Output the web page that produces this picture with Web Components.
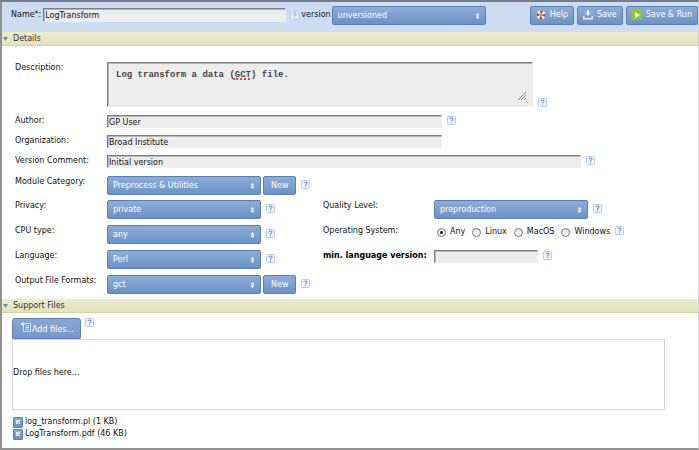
<!DOCTYPE html>
<html lang="en">
<head>
<meta charset="utf-8">
<title>Module Editor</title>
<style>
  html, body { margin: 0; min-height: 100%; }
  body {
    font: 8px/12px "DejaVu Sans", Verdana, sans-serif;
    color: #111;
    background: #fff;
    min-height: 100vh;
    display: flex;
    flex-direction: column;
  }
</style>
</head>
<body>
<module-editor></module-editor>
<script>
const BASE = `
  *, *::before, *::after { box-sizing: border-box; }
  button, input, select, textarea { font: inherit; color: inherit; margin: 0; border-radius: 0; }
  input[type=text], textarea {
    background: #ededed; border: 1px solid #ededed;
    border-top-color: #7d7d7d; border-left-color: #7d7d7d; outline: none;
    box-shadow: inset 1px 1px #b8b8b8;
  }
  input[type=text] { height: 13px; padding: 1px 0 0 1px; line-height: 10px; }
`;

class BaseElement extends HTMLElement {
  connectedCallback() {
    if (this.shadowRoot) return;
    const t = document.createElement('template');
    t.innerHTML = `<style>${BASE}${this.styles()}</style>${this.markup()}`;
    this.attachShadow({ mode: 'open' }).append(t.content.cloneNode(true));
  }
  attr(name) { return (this.getAttribute(name) || '').replace(/&/g, '&amp;').replace(/"/g, '&quot;'); }
}

customElements.define('help-tip', class extends BaseElement {
  styles() { return `
    :host { display: block; flex: none; width: 9px; height: 9px; }
    :host([faint]) { opacity: .6; }
    button { display: block; width: 9px; height: 9px; padding: 0; border: 0; background: none; }
    svg { display: block; }`; }
  markup() { return `
    <button type="button" aria-label="Help">
      <svg width="9" height="9" viewBox="0 0 9 9">
        <rect x=".5" y=".5" width="8" height="8" rx="1" fill="#eef4fb" stroke="#b9cde4"/>
        <path d="M3 3.3C3 1.6 6 1.6 6 3.2C6 4.2 4.5 4.1 4.5 5.4M4.5 6.4V7.4" fill="none" stroke="#6f96c6" stroke-width="1.1"/>
      </svg>
    </button>`; }
});

customElements.define('action-button', class extends BaseElement {
  styles() { return `
    :host { display: block; flex: none; }
    button {
      display: flex; align-items: center; justify-content: center; gap: 4px;
      height: 19px; padding: 0 5px; color: #fff; white-space: nowrap;
      border: 1px solid #5a7fb2; border-radius: 2px;
      background: linear-gradient(#8eadd8, #6b92c5);
    }
    :host([plain]) button { padding: 0 7px; }
    :host([large]) button { height: 21px; padding: 0 6px 0 8px; border-radius: 3px 3px 1px 1px; background: linear-gradient(#8ba6d2, #7896c8); gap: 0; }
    :host([large]) slot:not([name]) { display: block; padding-top: 3px; }
    :host([large]) slot[name] { display: block; height: 14px; }
    :host([tiny]) button { width: 10px; height: 11px; padding: 0; border-radius: 1px; }`; }
  markup() { return `<button type="button" ${this.hasAttribute('name') ? `aria-label="${this.attr('name')}"` : ''}><slot name="icon"></slot><slot></slot></button>`; }
});

const SELECT_CSS = `
  .select { position: relative; flex: none; width: 154px; height: 19px; }
  select {
    display: block; appearance: none; width: 100%; height: 19px; padding: 1px 16px 0 5px; color: #fff;
    border: 1px solid #5a7fb2; border-radius: 2px; background: linear-gradient(#8eadd8, #6b92c5);
  }
  .select svg { position: absolute; right: 6px; top: 7px; pointer-events: none; }`;
const selectMarkup = value => `
  <span class="select">
    <select id="control"><option>${value}</option></select>
    <svg width="5" height="6" viewBox="0 0 5 6"><path d="M.5 2.5L2.5 0L4.5 2.5ZM.5 3.5L2.5 6L4.5 3.5Z" fill="#fff"/></svg>
  </span>`;

const ROW_CSS = `
  :host { display: flex; align-items: flex-start; }
  label.name { flex: none; width: var(--label-width, 92px); white-space: nowrap; }
  label.strong { font-weight: bold; color: #000; }
  help-tip { margin: 1px 0 0 5px; }`;

customElements.define('text-field', class extends BaseElement {
  styles() { return `${ROW_CSS}
    input { flex: 0 1 auto; min-width: 0; width: var(--field-width, 335px); }`; }
  markup() { return `
    <label class="name ${this.hasAttribute('strong') ? 'strong' : ''}" for="control">${this.attr('label')}</label>
    <input id="control" type="text" value="${this.attr('value')}">
    ${this.hasAttribute('tip') ? '<help-tip></help-tip>' : ''}`; }
});

customElements.define('note-field', class extends BaseElement {
  styles() { return `${ROW_CSS}
    :host { align-items: flex-end; }
    label.name { align-self: flex-start; }
    .area { position: relative; flex: 0 1 426px; min-width: 0; }
    textarea {
      display: block; width: 100%; height: 45px; padding: 6px 8px; resize: none; overflow: hidden;
      font: bold 9px/12px "Liberation Mono", "Courier New", monospace; color: #444;
    }
    .spelling { position: absolute; left: 126px; top: 16px; width: 17px; border-top: 2px dotted #d4483f; }
    .grip { position: absolute; right: 7px; bottom: 7px; }`; }
  markup() { return `
    <label class="name" for="control">${this.attr('label')}</label>
    <span class="area">
      <textarea id="control" spellcheck="false">${this.attr('value')}</textarea>
      <span class="spelling"></span>
      <svg class="grip" width="8" height="8" viewBox="0 0 8 8"><path d="M0 8L8 0M3 8L8 3M6 8L8 6" stroke="#777" stroke-width=".9"/></svg>
    </span>
    <help-tip></help-tip>`; }
});

customElements.define('select-field', class extends BaseElement {
  styles() { return `${ROW_CSS}${SELECT_CSS}
    help-tip { margin-top: 4px; }
    action-button { margin-left: 2px; }`; }
  markup() { return `
    <label class="name" for="control">${this.attr('label')}</label>
    ${selectMarkup(this.attr('value'))}
    ${this.hasAttribute('creatable') ? '<action-button plain>New</action-button>' : ''}
    <help-tip></help-tip>`; }
});

customElements.define('radio-field', class extends BaseElement {
  styles() { return `${ROW_CSS}
    .caption { flex: none; width: var(--label-width); white-space: nowrap; }
    .choices { display: flex; gap: 7px; padding: 1px 0 0 3px; }
    .choices label { display: flex; align-items: center; gap: 4px; white-space: nowrap; }
    input {
      appearance: none; width: 9px; height: 9px; border: 1px solid #777; border-radius: 50%;
      background: linear-gradient(#ddd, #fff);
    }
    input:checked { background: radial-gradient(circle, #222 0 1px, #eee 2px); }`; }
  markup() {
    const choices = this.attr('choices').split(',');
    return `
    <span class="caption" id="caption">${this.attr('label')}</span>
    <div class="choices" role="radiogroup" aria-labelledby="caption">
      ${choices.map((c, i) => `<label><input type="radio" name="choice" ${i ? '' : 'checked'}>${c}</label>`).join('')}
    </div>
    <help-tip></help-tip>`;
  }
});

customElements.define('editor-section', class extends BaseElement {
  styles() { return `
    :host { display: block; }
    h2 { margin: 0; font: inherit; }
    h2 button {
      display: flex; align-items: center; gap: 5px; width: 100%; height: 14px; padding: 0 0 0 1px;
      text-align: left; color: #333; border: 0; border-bottom: 1px solid #d2d1a3;
      background: linear-gradient(#ebebd3, #e2e2bb);
    }`; }
  markup() { return `
    <h2><button type="button" aria-expanded="true">
      <svg width="5" height="4" viewBox="0 0 5 4"><path d="M0 0H5L2.5 4Z" fill="#5c93bd"/></svg>
      ${this.attr('heading')}
    </button></h2>
    <slot></slot>`; }
});

customElements.define('editor-toolbar', class extends BaseElement {
  styles() { return `${SELECT_CSS}
    :host { display: flex; align-items: center; height: 30px; padding: 0 0 4px 9px; background: #cedcf1; }
    label { flex: none; white-space: nowrap; }
    input[type=text] { flex: 0 1 243px; min-width: 0; height: 14px; margin: 0 4px 0 2px; }
    help-tip { margin-right: 2px; }
    .select { margin-left: 1px; }
    .actions { display: flex; gap: 3px; margin-left: auto; }`; }
  markup() { return `
    <label for="name">Name*:</label>
    <input id="name" type="text" value="LogTransform">
    <help-tip faint></help-tip>
    <label for="control">version</label>
    ${selectMarkup('unversioned')}
    <div class="actions">
      <action-button>
        <svg slot="icon" width="10" height="10" viewBox="0 0 10 10"><circle cx="5" cy="5" r="3" fill="none" stroke="#fff" stroke-width="3"/><circle cx="5" cy="5" r="3" fill="none" stroke="#c4493d" stroke-width="3" stroke-dasharray="2.6 2.112" stroke-dashoffset="1.3"/></svg>
        Help
      </action-button>
      <action-button>
        <svg slot="icon" width="10" height="10" viewBox="0 0 10 10"><rect x="1" y="0" width="8" height="6" rx="1" fill="#7caee6"/><path d="M5 0V3" stroke="#fff" stroke-width="2"/><path d="M2.5 2.8H7.5L5 5.8Z" fill="#fff"/><path d="M.8 6V8.7H9.2V6" fill="none" stroke="#e6f0ff" stroke-width="1.4"/></svg>
        Save
      </action-button>
      <action-button>
        <svg slot="icon" width="10" height="10" viewBox="0 0 10 10"><rect width="10" height="10" rx="1" fill="#91c52d"/><path d="M3 2L8 5L3 8Z" fill="#fff"/></svg>
        Save &amp; Run
      </action-button>
    </div>`; }
});

customElements.define('support-files', class extends BaseElement {
  styles() { return `
    :host { display: block; padding: 5px 33px 8px 10px; }
    .add { display: flex; align-items: flex-start; gap: 4px; }
    .drop { display: flex; align-items: center; height: 71px; padding: 0 0 4px; border: 1px solid #d6d6d6; }
    ul { list-style: none; margin: 6px 0 0; padding: 0 0 0 1px; }
    li { display: flex; align-items: center; gap: 2px; height: 12px; }
    a { color: inherit; text-decoration: none; }`; }
  markup() {
    const files = ['log_transform.pl (1 KB)', 'LogTransform.pdf (46 KB)'];
    return `
    <div class="add">
      <action-button large>
        <svg slot="icon" width="11" height="11" viewBox="0 0 11 11"><path d="M2.5 2.5V9.5H9.5V1.5H4" fill="#5f9ad8" stroke="#d5e5f8"/><path d="M4.5 3.8H8M4.5 5.6H8M4.5 7.4H8" stroke="#fff" stroke-width=".9"/><path d="M2 0V4M0 2H4" stroke="#fff" stroke-width="1.2"/></svg>
        Add files...
      </action-button>
      <help-tip></help-tip>
    </div>
    <div class="drop">Drop files here...</div>
    <ul>${files.map(f => `
      <li><action-button tiny name="Remove file"><svg slot="icon" width="4" height="4" viewBox="0 0 4 4"><path d="M0 0L4 4M4 0L0 4" stroke="#fff" stroke-width="1.4"/></svg></action-button><a href="#">${f}</a></li>`).join('')}
    </ul>`;
  }
});

customElements.define('module-editor', class extends BaseElement {
  styles() { return `
    :host {
      display: block; flex: 1; border: 2px solid #909090; border-top-color: #757d8b;
      border-right: 1px solid #d5d5d5; overflow: hidden;
    }
    .details { display: flex; flex-direction: column; padding: 16px 0 5px 13px; }
    .texts { display: flex; flex-direction: column; gap: 7px; margin: 8px 0; }
    .wide { --field-width: 474px; }
    .pairs { display: grid; grid-template-columns: 308px 1fr; row-gap: 6px; margin-top: 5px; }
    .second { --label-width: 111px; --field-width: 104px; }`; }
  markup() { return `
    <editor-toolbar></editor-toolbar>
    <editor-section heading="Details">
      <div class="details">
        <note-field label="Description:" value="Log transform a data (GCT) file."></note-field>
        <div class="texts">
          <text-field label="Author:" value="GP User" tip></text-field>
          <text-field label="Organization:" value="Broad Institute"></text-field>
          <text-field class="wide" label="Version Comment:" value="Initial version" tip></text-field>
        </div>
        <select-field label="Module Category:" value="Preprocess &amp; Utilities" creatable></select-field>
        <div class="pairs">
          <select-field label="Privacy:" value="private"></select-field>
          <select-field class="second" label="Quality Level:" value="preproduction"></select-field>
          <select-field label="CPU type:" value="any"></select-field>
          <radio-field class="second" label="Operating System:" choices="Any,Linux,MacOS,Windows"></radio-field>
          <select-field label="Language:" value="Perl"></select-field>
          <text-field class="second" label="min. language version:" strong tip></text-field>
          <select-field label="Output File Formats:" value="gct" creatable></select-field>
        </div>
      </div>
    </editor-section>
    <editor-section heading="Support Files">
      <support-files></support-files>
    </editor-section>`; }
});
</script>
</body>
</html>
